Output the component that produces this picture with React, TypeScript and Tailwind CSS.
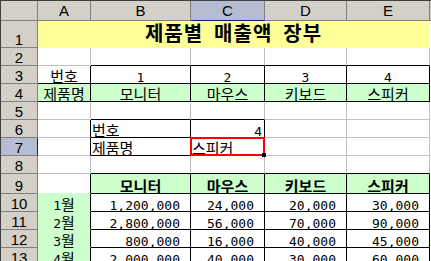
import React from 'react';

const COLS = ['A', 'B', 'C', 'D', 'E'];
const HEIGHTS = [27, 18, 18, 18, 18, 18, 18, 18, 20, 18, 18, 18, 18];

const data: Record<number, string[]> = {
  3: ['번호', '1', '2', '3', '4'],
  4: ['제품명', '모니터', '마우스', '키보드', '스피커'],
  6: ['', '번호', '4'],
  7: ['', '제품명', '스피커'],
  9: ['', '모니터', '마우스', '키보드', '스피커'],
  10: ['1월', '1,200,000', '24,000', '20,000', '30,000'],
  11: ['2월', '2,800,000', '56,000', '70,000', '90,000'],
  12: ['3월', '800,000', '16,000', '40,000', '45,000'],
  13: ['4월', '2,000,000', '40,000', '30,000', '60,000'],
};

// black-bordered cells
const bordered = (r: number, c: number) =>
  (r === 3 && c >= 1) ||
  r === 4 ||
  ((r === 6 || r === 7) && (c === 1 || c === 2)) ||
  (r >= 9 && c >= 1);

const fill = (r: number, c: number): 'y' | 'n' | null => {
  if (r === 1) return 'y';
  if (r === 4) return 'n';
  if (r === 9 && c >= 1) return 'n';
  if (r >= 10 && c === 0) return 'n';
  return null;
};

type Edge = 'k' | 'g' | 'y' | 'n';

const edge = (r: number, c: number, r2: number, c2: number): Edge => {
  const inside = c2 <= 4;
  if (bordered(r, c) || (inside && bordered(r2, c2))) return 'k';
  const f = fill(r, c);
  if (f) return f;
  const f2 = inside ? fill(r2, c2) : null;
  if (f2) return f2;
  return 'g';
};

const RIGHT: Record<Edge, string> = {
  k: 'border-r-black',
  g: 'border-r-[#c0c0c0]',
  y: 'border-r-[#ffff99]',
  n: 'border-r-[#ccffcc]',
};
const BOTTOM: Record<Edge, string> = {
  k: 'border-b-black',
  g: 'border-b-[#c0c0c0]',
  y: 'border-b-[#ffff99]',
  n: 'border-b-[#ccffcc]',
};
const BG = { y: 'bg-[#ffff99]', n: 'bg-[#ccffcc]' };

const Txt = ({ s }: { s: string }) => (
  <>
    {s.split(/([\uAC00-\uD7A3]+)/).map((p, i) =>
      /[\uAC00-\uD7A3]/.test(p) ? (
        <span key={i} className="text-[15px] leading-none font-['Noto_Sans_CJK_KR',sans-serif]">
          {p}
        </span>
      ) : (
        p
      )
    )}
  </>
);

const DataCell = ({ r, c }: { r: number; c: number }) => {
  const text = data[r]?.[c] ?? '';
  const f = fill(r, c);
  let align = 'justify-center';
  if (r === 6 || r === 7) {
    if (c === 1) align = 'justify-start pl-[1px]';
    else if (c === 2) align = r === 6 ? 'justify-end pr-[2px]' : 'justify-start pl-[1px]';
  } else if (r >= 10 && c >= 1) {
    align = 'justify-end pr-[10px]';
  }
  const selected = r === 7 && c === 2;
  return (
    <div
      className={`relative flex items-end border-r border-b ${RIGHT[edge(r, c, r, c + 1)]} ${BOTTOM[edge(r, c, r + 1, c)]} ${f ? BG[f] : 'bg-white'} ${align}`}
    >
      {text && (
        <span className={`relative top-[1px] whitespace-nowrap leading-none ${r === 9 ? 'font-bold' : ''}`}>
          <Txt s={text} />
        </span>
      )}
      {selected && (
        <>
          <div className="absolute -inset-[1px] z-10 border-2 border-[#ff0000]" />
          <div className="absolute -right-[2px] -bottom-[2px] z-20 h-[4px] w-[4px] bg-black" />
        </>
      )}
    </div>
  );
};

const RowHead = ({ r }: { r: number }) => (
  <div
    className={`flex items-end justify-center border-r border-b border-b-[#808080] font-['Liberation_Sans',sans-serif] text-[15px] ${
      r === 7 ? 'bg-[#b6bdd2] border-r-[#0a246a]' : 'bg-[#d4d0c8] border-r-[#808080]'
    }`}
  >
    <span className="leading-none">{r}</span>
  </div>
);

export default function App() {
  return (
    <div className="h-[261px] w-[431px] overflow-hidden border-t border-l border-[#404040] bg-white font-['DejaVu_Sans_Mono','Noto_Sans_CJK_KR',monospace] text-[13px] text-black">
      <div className="grid grid-cols-[37px_53px_100px_74px_82px_83px_1fr] grid-rows-[20px_27px_18px_18px_18px_18px_18px_18px_18px_20px_18px_18px_18px_18px]">
        {/* header row */}
        <div className="border-r border-b border-[#808080] bg-[#d4d0c8]" />
        {COLS.map((col) => (
          <div
            key={col}
            className={`flex items-center justify-center border-r border-b border-r-[#808080] font-['Liberation_Sans',sans-serif] text-[15px] ${
              col === 'C' ? 'bg-[#b6bdd2] border-b-[#0a246a]' : 'bg-[#d4d0c8] border-b-[#808080]'
            }`}
          >
            <span className="leading-none">{col}</span>
          </div>
        ))}
        <div className="border-b border-[#808080] bg-[#d4d0c8]" />

        {HEIGHTS.map((_, i) => {
          const r = i + 1;
          if (r === 1) {
            return (
              <React.Fragment key={r}>
                <RowHead r={1} />
                <div className="col-span-5 flex items-end justify-center gap-[11px] border-r border-b border-[#ffff99] bg-[#ffff99] pb-[4px] font-['Noto_Sans_CJK_KR',sans-serif] text-[20px] font-bold leading-none tracking-[1px]">
                  <span>제품별</span>
                  <span>매출액</span>
                  <span>장부</span>
                </div>
                <div className="bg-white" />
              </React.Fragment>
            );
          }
          return (
            <React.Fragment key={r}>
              <RowHead r={r} />
              {COLS.map((_, c) => (
                <DataCell key={c} r={r} c={c} />
              ))}
              <div className="bg-white" />
            </React.Fragment>
          );
        })}
      </div>
    </div>
  );
}
